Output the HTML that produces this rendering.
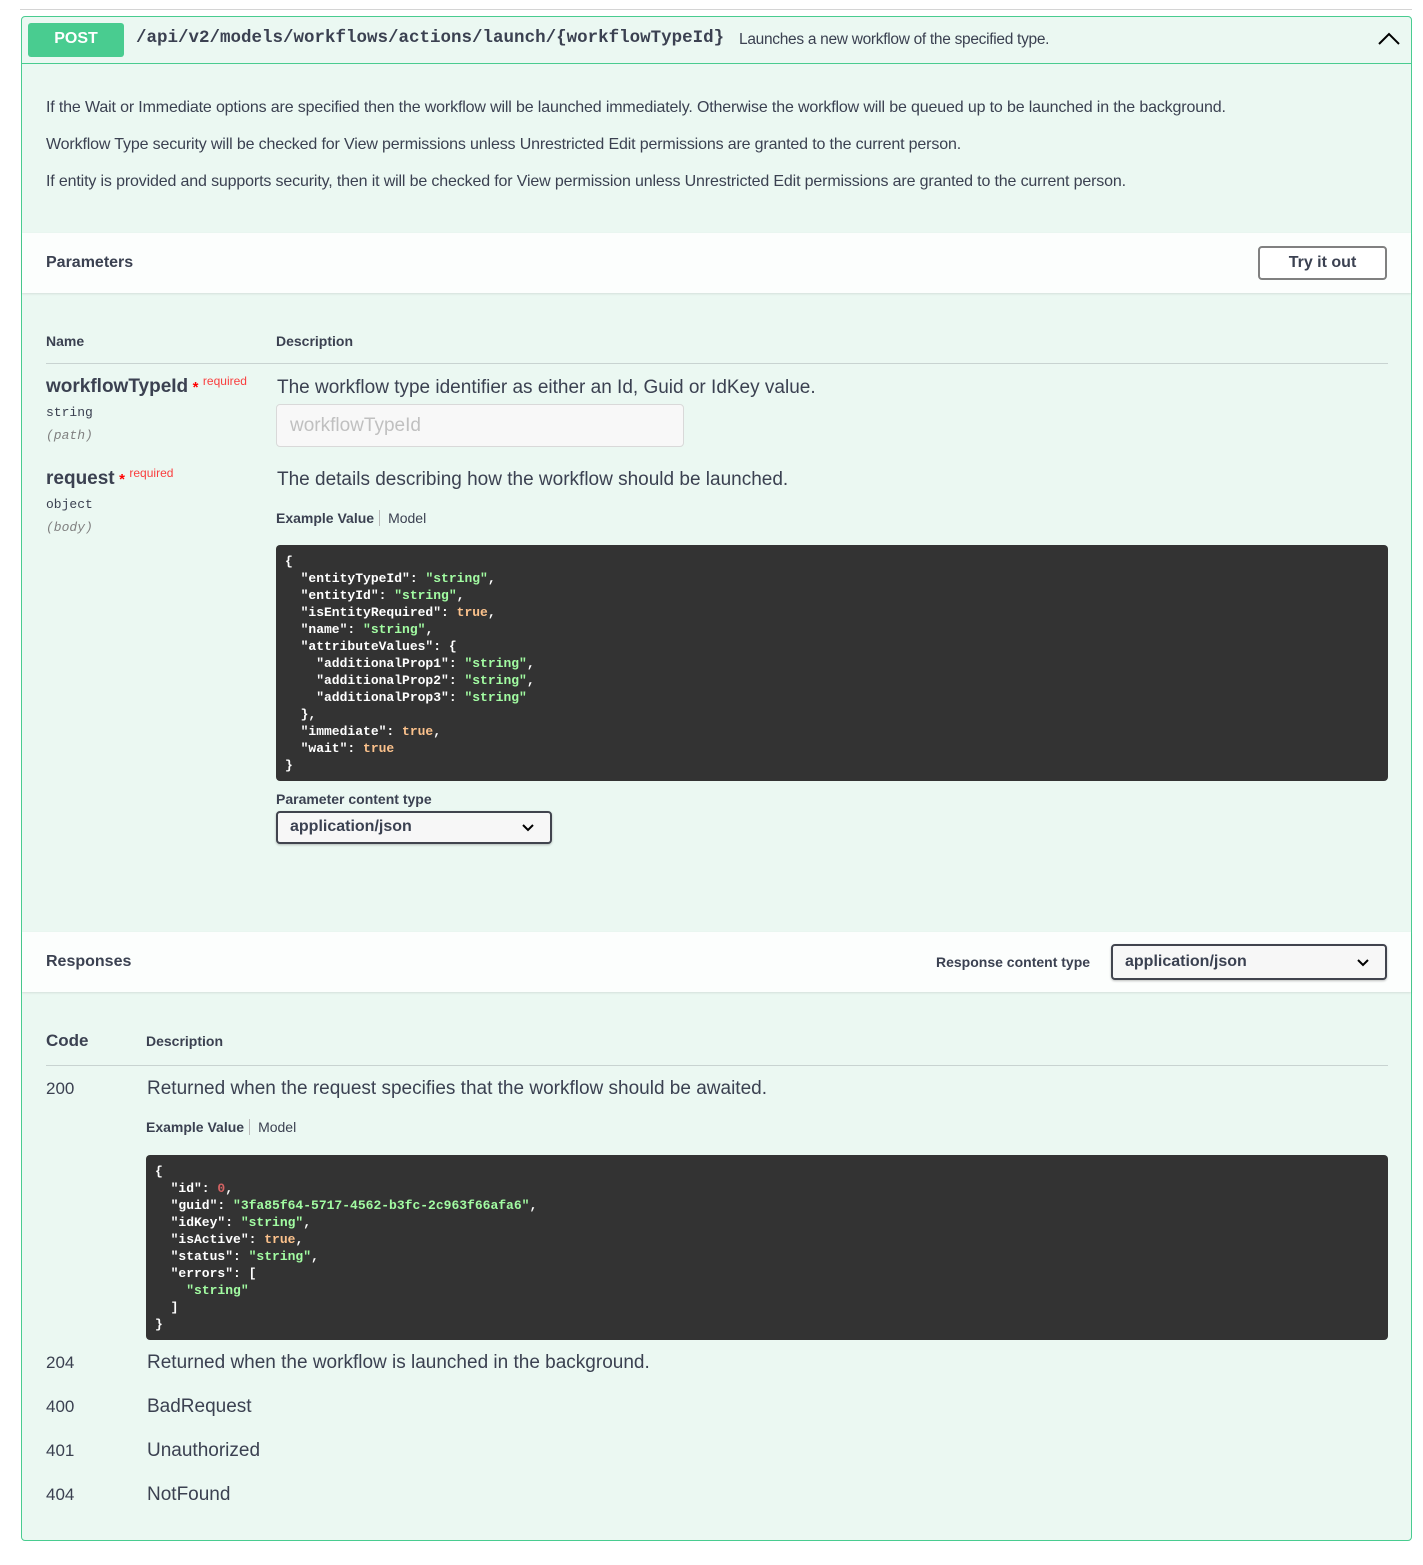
<!DOCTYPE html>
<html><head><meta charset="utf-8"><style>
*{box-sizing:border-box;margin:0;padding:0}
body{width:1423px;height:1565px;background:#fff;font-family:"Liberation Sans",Arial,sans-serif;color:#3b4151;position:relative;overflow:hidden}
.a{position:absolute}
.rule{left:20px;top:9px;width:1392px;height:1px;background:#d4d4d4}
.blk{left:21px;top:16px;width:1391px;height:1525px;border:1px solid #49cc90;border-radius:4px;background:#ebf8f2}
.hdr{left:0;top:0;width:1389px;height:47px;border-bottom:1px solid #49cc90}
.post{left:6px;top:6px;width:96px;height:34px;background:#49cc90;border-radius:3px;color:#fff;font-weight:bold;font-size:16px;text-align:center;line-height:32px}
.path{left:114px;top:11px;font-family:"Liberation Mono",monospace;font-weight:bold;font-size:17.5px;color:#3b4151}
.sum{left:717px;top:14px;font-size:15.5px;letter-spacing:-.3px;color:#3b4151}
.desc p{position:absolute;left:24px;font-size:16px;letter-spacing:-.15px;white-space:nowrap}
.sec{left:0;width:1389px;height:60px;background:rgba(255,255,255,.85);box-shadow:0 1px 2px rgba(0,0,0,.1)}
.sec .t{position:absolute;left:24px;top:21px;font-weight:bold;font-size:16px}
.btn{left:1236px;top:13px;width:129px;height:34px;border:2px solid #808080;border-radius:4px;font-weight:bold;font-size:16px;text-align:center;line-height:30px;background:#fff}
.th{font-size:14px;font-weight:bold}
.line{height:1px;background:rgba(59,65,81,.2)}
.pn{font-size:19px;font-weight:bold}
.req{color:#f93e3e;font-size:12px}
.star{color:red;font-size:15px;font-weight:bold}
.mono{font-family:"Liberation Mono",monospace;font-size:13px}
.it{font-family:"Liberation Mono",monospace;font-size:13px;font-style:italic;color:#808080}
.code{background:#333;border-radius:4px;color:#fff;font-family:"Liberation Mono",monospace;font-weight:bold;font-size:13px;line-height:17px;padding:8px 9px;white-space:pre}
.s{color:#a2fca2}.b{color:#fcc28c}.n{color:#d36363}
.ex{font-size:14px}.ex b{font-weight:bold}.ex span{border-left:1px solid #bbb;padding-left:8px;margin-left:5px}
.sel{border:2px solid #41444e;border-radius:4px;background:#f7f7f7;box-shadow:0 1px 2px rgba(0,0,0,.25);font-weight:bold;font-size:16px;padding-left:12px;line-height:28px}
.sel svg{position:absolute;right:16px;top:11px}
.big{font-size:19px}
</style></head><body>
<div class="a rule"></div>
<div class="a blk">
 <div class="a hdr">
  <div class="a post">POST</div>
  <div class="a path">/api/v2/models/workflows/actions/launch/{workflowTypeId}</div>
  <div class="a sum">Launches a new workflow of the specified type.</div>
  <svg class="a" style="left:1355px;top:14px" width="24" height="16" viewBox="0 0 24 16"><path d="M2 13 L12 3 L22 13" fill="none" stroke="#000" stroke-width="2"/></svg>
 </div>
 <div class="desc">
  <p style="top:82px">If the Wait or Immediate options are specified then the workflow will be launched immediately. Otherwise the workflow will be queued up to be launched in the background.</p>
  <p style="top:119px">Workflow Type security will be checked for View permissions unless Unrestricted Edit permissions are granted to the current person.</p>
  <p style="top:156px">If entity is provided and supports security, then it will be checked for View permission unless Unrestricted Edit permissions are granted to the current person.</p>
 </div>
 <div class="a sec" style="top:216px"><div class="t">Parameters</div><div class="a btn">Try it out</div></div>
 <div class="a th" style="left:24px;top:316px">Name</div>
 <div class="a th" style="left:254px;top:316px">Description</div>
 <div class="a line" style="left:24px;top:346px;width:1342px"></div>
 <div class="a" style="left:24px;top:359px;white-space:nowrap"><span class="pn">workflowTypeId</span> <span class="star">*</span> <span class="req" style="position:relative;top:-7px">required</span></div>
 <div class="a mono" style="left:24px;top:388px">string</div>
 <div class="a it" style="left:24px;top:411px">(path)</div>
 <div class="a big" style="left:255px;top:360px">The workflow type identifier as either an Id, Guid or IdKey value.</div>
 <div class="a" style="left:254px;top:387px;width:408px;height:43px;border:1px solid #d9d9d9;border-radius:4px;background:#f8f8f8;color:#c0c0c0;font-size:19px;padding:10px 0 0 13px">workflowTypeId</div>
 <div class="a" style="left:24px;top:451px;white-space:nowrap"><span class="pn">request</span> <span class="star">*</span> <span class="req" style="position:relative;top:-7px">required</span></div>
 <div class="a mono" style="left:24px;top:480px">object</div>
 <div class="a it" style="left:24px;top:503px">(body)</div>
 <div class="a big" style="left:255px;top:452px">The details describing how the workflow should be launched.</div>
 <div class="a ex" style="left:254px;top:493px"><b>Example Value</b><span>Model</span></div>
 <div class="a code" style="left:254px;top:528px;width:1112px;height:236px">{
  "entityTypeId": <i class="s" style="font-style:normal">"string"</i>,
  "entityId": <i class="s" style="font-style:normal">"string"</i>,
  "isEntityRequired": <i class="b" style="font-style:normal">true</i>,
  "name": <i class="s" style="font-style:normal">"string"</i>,
  "attributeValues": {
    "additionalProp1": <i class="s" style="font-style:normal">"string"</i>,
    "additionalProp2": <i class="s" style="font-style:normal">"string"</i>,
    "additionalProp3": <i class="s" style="font-style:normal">"string"</i>
  },
  "immediate": <i class="b" style="font-style:normal">true</i>,
  "wait": <i class="b" style="font-style:normal">true</i>
}</div>
 <div class="a th" style="left:254px;top:774px;font-size:14px">Parameter content type</div>
 <div class="a sel" style="left:254px;top:794px;width:276px;height:33px">application/json<svg width="12" height="8" viewBox="0 0 12 8"><path d="M1 1 L6 6 L11 1" fill="none" stroke="#000" stroke-width="2"/></svg></div>

 <div class="a sec" style="top:915px"><div class="t">Responses</div>
  <div class="a th" style="left:914px;top:22px;font-size:14px">Response content type</div>
  <div class="a sel" style="left:1089px;top:12px;width:276px;height:36px;line-height:31px">application/json<svg width="12" height="8" viewBox="0 0 12 8" style="top:13px"><path d="M1 1 L6 6 L11 1" fill="none" stroke="#000" stroke-width="2"/></svg></div>
 </div>
 <div class="a" style="left:24px;top:1014px;font-size:17px;font-weight:bold">Code</div>
 <div class="a th" style="left:124px;top:1016px">Description</div>
 <div class="a line" style="left:24px;top:1048px;width:1342px"></div>
 <div class="a" style="left:24px;top:1062px;font-size:17px">200</div>
 <div class="a big" style="left:125px;top:1061px">Returned when the request specifies that the workflow should be awaited.</div>
 <div class="a ex" style="left:124px;top:1102px"><b>Example Value</b><span>Model</span></div>
 <div class="a code" style="left:124px;top:1138px;width:1242px;height:185px">{
  "id": <i class="n" style="font-style:normal">0</i>,
  "guid": <i class="s" style="font-style:normal">"3fa85f64-5717-4562-b3fc-2c963f66afa6"</i>,
  "idKey": <i class="s" style="font-style:normal">"string"</i>,
  "isActive": <i class="b" style="font-style:normal">true</i>,
  "status": <i class="s" style="font-style:normal">"string"</i>,
  "errors": [
    <i class="s" style="font-style:normal">"string"</i>
  ]
}</div>
 <div class="a" style="left:24px;top:1336px;font-size:17px">204</div>
 <div class="a big" style="left:125px;top:1335px">Returned when the workflow is launched in the background.</div>
 <div class="a" style="left:24px;top:1380px;font-size:17px">400</div>
 <div class="a big" style="left:125px;top:1379px">BadRequest</div>
 <div class="a" style="left:24px;top:1424px;font-size:17px">401</div>
 <div class="a big" style="left:125px;top:1423px">Unauthorized</div>
 <div class="a" style="left:24px;top:1468px;font-size:17px">404</div>
 <div class="a big" style="left:125px;top:1467px">NotFound</div>
</div>
</body></html>
